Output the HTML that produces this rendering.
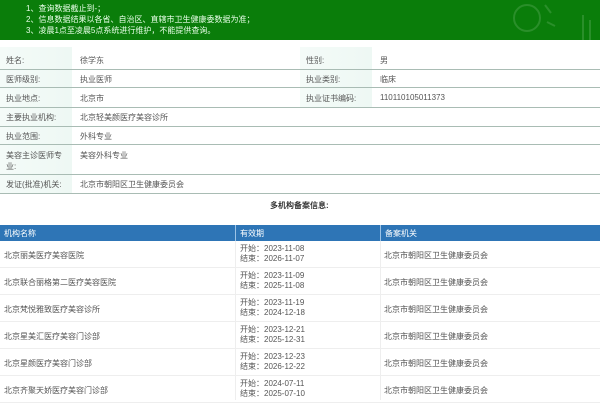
<!DOCTYPE html>
<html><head><meta charset="utf-8"><style>
*{margin:0;padding:0;box-sizing:border-box}
body{width:600px;height:400px;overflow:hidden;background:#fff;font-family:"Liberation Sans","Noto Sans CJK SC",sans-serif;font-size:8px;color:#555}
.hd{position:absolute;left:0;top:0;width:600px;height:40px;background:#0a7d0a;color:#e8ffe8;font-size:8px}
.hd div{position:absolute;left:26px}
.row{position:absolute;left:0;width:600px;border-bottom:1px solid #a9bcb4}
.l{position:absolute;left:0;top:0;bottom:0;width:72px;background:linear-gradient(90deg,#f4fbf8,#eef8f4);}
.t{position:absolute}
.th{position:absolute;left:0;top:225px;width:600px;height:16px;background:#2e75b6;color:#fff}
.tr{position:absolute;left:0;width:600px;height:27px;border-bottom:1px solid #eee}
</style></head><body>
<div class="hd">
<div style="top:3px">1、查询数据截止到-；</div>
<div style="top:14px">2、信息数据结果以各省、自治区、直辖市卫生健康委数据为准；</div>
<div style="top:25px">3、凌晨1点至凌晨5点系统进行维护，不能提供查询。</div>
<svg style="position:absolute;left:505px;top:0" width="95" height="40"><g fill="none" stroke="#2a8f2a" stroke-width="2"><circle cx="22" cy="18" r="13"/><path d="M40 5l6 8M42 22l8 4M78 15v25M85 20v20"/></g></svg>
</div>
<div class="row" style="top:47px;height:23px"><div class="l"></div><div class="t" style="left:6px;top:8px">姓名:</div><div class="t" style="left:80px;top:8px">徐学东</div><div class="l" style="left:300px"></div><div class="t" style="left:306px;top:8px">性别:</div><div class="t" style="left:380px;top:8px">男</div></div>
<div class="row" style="top:70px;height:18px"><div class="l"></div><div class="t" style="left:6px;top:4px">医师级别:</div><div class="t" style="left:80px;top:4px">执业医师</div><div class="l" style="left:300px"></div><div class="t" style="left:306px;top:4px">执业类别:</div><div class="t" style="left:380px;top:4px">临床</div></div>
<div class="row" style="top:88px;height:20px"><div class="l"></div><div class="t" style="left:6px;top:5px">执业地点:</div><div class="t" style="left:80px;top:5px">北京市</div><div class="l" style="left:300px"></div><div class="t" style="left:306px;top:5px">执业证书编码:</div><div class="t" style="left:380px;top:5px">110110105011373</div></div>
<div class="row" style="top:108px;height:19px"><div class="l"></div><div class="t" style="left:6px;top:4px">主要执业机构:</div><div class="t" style="left:80px;top:4px">北京轻美颜医疗美容诊所</div></div>
<div class="row" style="top:127px;height:18px"><div class="l"></div><div class="t" style="left:6px;top:4px">执业范围:</div><div class="t" style="left:80px;top:4px">外科专业</div></div>
<div class="row" style="top:145px;height:30px"><div class="l"></div><div class="t" style="left:6px;top:5px;width:64px;line-height:11px">美容主诊医师专业:</div><div class="t" style="left:80px;top:5px">美容外科专业</div></div>
<div class="row" style="top:175px;height:19px"><div class="l"></div><div class="t" style="left:6px;top:4px">发证(批准)机关:</div><div class="t" style="left:80px;top:4px">北京市朝阳区卫生健康委员会</div></div>
<div class="t" style="left:270px;top:200px;font-weight:bold;color:#333">多机构备案信息:</div>
<div class="th"><div class="t" style="left:4px;top:3px">机构名称</div><div class="t" style="left:235px;top:0;height:16px;border-left:1px solid #9cc3e6;padding:3px 0 0 4px">有效期</div><div class="t" style="left:380px;top:0;height:16px;border-left:1px solid #9cc3e6;padding:3px 0 0 4px">备案机关</div></div>
<div class="tr" style="top:241px"><div class="t" style="left:4px;top:9px">北京丽美医疗美容医院</div><div class="t" style="left:240px;top:3px;line-height:10px">开始：2023-11-08<br>结束：2026-11-07</div><div class="t" style="left:384px;top:9px">北京市朝阳区卫生健康委员会</div></div>
<div class="tr" style="top:268px"><div class="t" style="left:4px;top:9px">北京联合丽格第二医疗美容医院</div><div class="t" style="left:240px;top:3px;line-height:10px">开始：2023-11-09<br>结束：2025-11-08</div><div class="t" style="left:384px;top:9px">北京市朝阳区卫生健康委员会</div></div>
<div class="tr" style="top:295px"><div class="t" style="left:4px;top:9px">北京梵悦雅致医疗美容诊所</div><div class="t" style="left:240px;top:3px;line-height:10px">开始：2023-11-19<br>结束：2024-12-18</div><div class="t" style="left:384px;top:9px">北京市朝阳区卫生健康委员会</div></div>
<div class="tr" style="top:322px"><div class="t" style="left:4px;top:9px">北京星美汇医疗美容门诊部</div><div class="t" style="left:240px;top:3px;line-height:10px">开始：2023-12-21<br>结束：2025-12-31</div><div class="t" style="left:384px;top:9px">北京市朝阳区卫生健康委员会</div></div>
<div class="tr" style="top:349px"><div class="t" style="left:4px;top:9px">北京星颜医疗美容门诊部</div><div class="t" style="left:240px;top:3px;line-height:10px">开始：2023-12-23<br>结束：2026-12-22</div><div class="t" style="left:384px;top:9px">北京市朝阳区卫生健康委员会</div></div>
<div class="tr" style="top:376px"><div class="t" style="left:4px;top:9px">北京齐聚天娇医疗美容门诊部</div><div class="t" style="left:240px;top:3px;line-height:10px">开始：2024-07-11<br>结束：2025-07-10</div><div class="t" style="left:384px;top:9px">北京市朝阳区卫生健康委员会</div></div>
<div style="position:absolute;left:235px;top:241px;width:1px;height:159px;background:#eee"></div>
<div style="position:absolute;left:380px;top:241px;width:1px;height:159px;background:#eee"></div>
</body></html>
